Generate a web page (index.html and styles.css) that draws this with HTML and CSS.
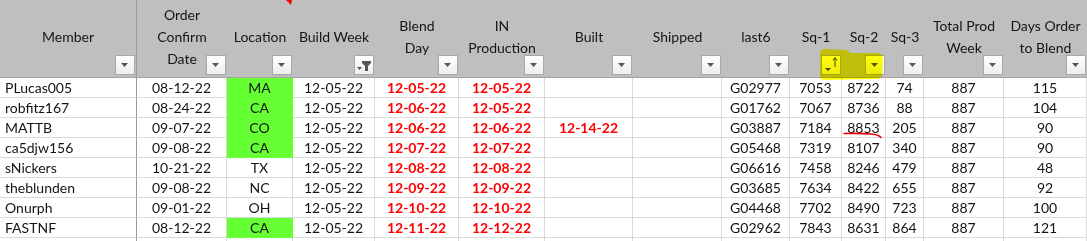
FILE: index.html
```html
<!DOCTYPE html>
<html>
<head>
<meta charset="utf-8">
<link rel="stylesheet" href="styles.css">
</head>
<body>
<div class="sheet">
  <div class="grid">
    <div class="h hm"><div class="lbl">Member</div><div class="btn"><svg width="8" height="5"><polygon points="0,0 7,0 3.5,4" fill="#555"/></svg></div></div>
    <div class="h"><div class="lbl">Order<br>Confirm<br>Date</div><div class="btn"><svg width="8" height="5"><polygon points="0,0 7,0 3.5,4" fill="#555"/></svg></div></div>
    <div class="h"><div class="lbl">Location</div><div class="btn"><svg width="8" height="5"><polygon points="0,0 7,0 3.5,4" fill="#555"/></svg></div></div>
    <div class="h"><div class="lbl">Build Week</div><div class="btn"><svg width="18" height="18"><polygon points="2,11 7,11 4.5,14" fill="#555"/><polygon points="7,5 16,5 16,7 13,10 13,15 10,15 10,10 7,7" fill="#555"/></svg></div></div>
    <div class="h"><div class="lbl">Blend<br>Day</div><div class="btn"><svg width="8" height="5"><polygon points="0,0 7,0 3.5,4" fill="#555"/></svg></div></div>
    <div class="h"><div class="lbl">IN<br>Production</div><div class="btn"><svg width="8" height="5"><polygon points="0,0 7,0 3.5,4" fill="#555"/></svg></div></div>
    <div class="h"><div class="lbl">Built</div><div class="btn"><svg width="8" height="5"><polygon points="0,0 7,0 3.5,4" fill="#555"/></svg></div></div>
    <div class="h"><div class="lbl">Shipped</div><div class="btn"><svg width="8" height="5"><polygon points="0,0 7,0 3.5,4" fill="#555"/></svg></div></div>
    <div class="h"><div class="lbl">last6</div><div class="btn"><svg width="8" height="5"><polygon points="0,0 7,0 3.5,4" fill="#555"/></svg></div></div>
    <div class="h"><div class="lbl">Sq-1</div><div class="btn"><svg width="18" height="18"><polygon points="3,12 9,12 6,15" fill="#444"/><line x1="13" y1="2" x2="13" y2="11" stroke="#444" stroke-width="1"/><polyline points="11,4.5 13,1.5 15,4.5" fill="none" stroke="#444" stroke-width="1"/></svg></div></div>
    <div class="h"><div class="lbl">Sq-2</div><div class="btn"><svg width="8" height="5"><polygon points="0,0 7,0 3.5,4" fill="#555"/></svg></div></div>
    <div class="h"><div class="lbl">Sq-3</div><div class="btn"><svg width="8" height="5"><polygon points="0,0 7,0 3.5,4" fill="#555"/></svg></div></div>
    <div class="h"><div class="lbl">Total Prod<br>Week</div><div class="btn"><svg width="8" height="5"><polygon points="0,0 7,0 3.5,4" fill="#555"/></svg></div></div>
    <div class="h"><div class="lbl">Days Order<br>to Blend</div><div class="btn"><svg width="8" height="5"><polygon points="0,0 7,0 3.5,4" fill="#555"/></svg></div></div>

    <div class="c m l">PLucas005</div><div class="c">08-12-22</div><div class="c g">MA</div><div class="c">12-05-22</div><div class="c r">12-05-22</div><div class="c r">12-05-22</div><div class="c"></div><div class="c"></div><div class="c">G02977</div><div class="c">7053</div><div class="c">8722</div><div class="c">74</div><div class="c">887</div><div class="c">115</div>

    <div class="c m l">robfitz167</div><div class="c">08-24-22</div><div class="c g">CA</div><div class="c">12-05-22</div><div class="c r">12-06-22</div><div class="c r">12-05-22</div><div class="c"></div><div class="c"></div><div class="c">G01762</div><div class="c">7067</div><div class="c">8736</div><div class="c">88</div><div class="c">887</div><div class="c">104</div>

    <div class="c m l">MATTB</div><div class="c">09-07-22</div><div class="c g">CO</div><div class="c">12-05-22</div><div class="c r">12-06-22</div><div class="c r">12-06-22</div><div class="c r">12-14-22</div><div class="c"></div><div class="c">G03887</div><div class="c">7184</div><div class="c">8853</div><div class="c">205</div><div class="c">887</div><div class="c">90</div>

    <div class="c m l">ca5djw156</div><div class="c">09-08-22</div><div class="c g">CA</div><div class="c">12-05-22</div><div class="c r">12-07-22</div><div class="c r">12-07-22</div><div class="c"></div><div class="c"></div><div class="c">G05468</div><div class="c">7319</div><div class="c">8107</div><div class="c">340</div><div class="c">887</div><div class="c">90</div>

    <div class="c m l">sNickers</div><div class="c">10-21-22</div><div class="c">TX</div><div class="c">12-05-22</div><div class="c r">12-08-22</div><div class="c r">12-08-22</div><div class="c"></div><div class="c"></div><div class="c">G06616</div><div class="c">7458</div><div class="c">8246</div><div class="c">479</div><div class="c">887</div><div class="c">48</div>

    <div class="c m l">theblunden</div><div class="c">09-08-22</div><div class="c">NC</div><div class="c">12-05-22</div><div class="c r">12-09-22</div><div class="c r">12-09-22</div><div class="c"></div><div class="c"></div><div class="c">G03685</div><div class="c">7634</div><div class="c">8422</div><div class="c">655</div><div class="c">887</div><div class="c">92</div>

    <div class="c m l">Onurph</div><div class="c">09-01-22</div><div class="c">OH</div><div class="c">12-05-22</div><div class="c r">12-10-22</div><div class="c r">12-10-22</div><div class="c"></div><div class="c"></div><div class="c">G04468</div><div class="c">7702</div><div class="c">8490</div><div class="c">723</div><div class="c">887</div><div class="c">100</div>

    <div class="c m l">FASTNF</div><div class="c">08-12-22</div><div class="c g">CA</div><div class="c">12-05-22</div><div class="c r">12-11-22</div><div class="c r">12-12-22</div><div class="c"></div><div class="c"></div><div class="c">G02962</div><div class="c">7843</div><div class="c">8631</div><div class="c">864</div><div class="c">887</div><div class="c">121</div>

    <div class="c m"></div><div class="c"></div><div class="c"></div><div class="c"></div><div class="c"></div><div class="c"></div><div class="c"></div><div class="c"></div><div class="c"></div><div class="c"></div><div class="c"></div><div class="c"></div><div class="c"></div><div class="c"></div>
  </div>
  <svg class="marks" width="1087" height="241">
    <polygon points="286,0 292,0 291,5" fill="#f00"/>
    <path d="M844 133.5 Q860 133 872 134 Q879 135 881 137.5" fill="none" stroke="#e00" stroke-width="1.6" stroke-linecap="round"/>
  </svg>
  <svg class="hilite" width="1087" height="241">
    <path d="M820 52 Q821 49 825 49 L846 50 Q849 51 850 53 L878 53 Q883 54 883 58 L882 76 Q881 79 876 79 L824 80 Q820 79 820 76 Z" fill="#ffff00"/>
  </svg>
</div>
</body>
</html>
```

FILE: styles.css
```css
html, body {
  margin: 0;
  padding: 0;
  background: #fff;
}

body {
  font-family: Lato, "Open Sans", sans-serif;
  font-size: 14px;
  color: #141414;
}

.sheet {
  position: relative;
  width: 1087px;
  height: 241px;
  overflow: hidden;
}

.grid {
  display: grid;
  grid-template-columns: 137px 90px 66px 82px 84px 86px 88px 89px 68px 52px 44px 38px 80px 83px;
  grid-template-rows: 78px repeat(9, 20px);
}

.h {
  box-sizing: border-box;
  background: #bfbfbf;
  border-bottom: 1px solid #a3a3a3;
  display: grid;
  color: #151515;
}

.hm {
  border-right: 1px solid #9a9a9a;
}

.lbl {
  grid-area: 1 / 1;
  align-self: center;
  justify-self: center;
  text-align: center;
  line-height: 22px;
  white-space: nowrap;
  padding-bottom: 3px;
}

.btn {
  grid-area: 1 / 1;
  align-self: end;
  justify-self: end;
  width: 20px;
  height: 20px;
  box-sizing: border-box;
  border: 1px solid #a8a8a8;
  background: linear-gradient(#ffffff, #ededed);
  margin: 0 1px 2px 0;
  display: flex;
  align-items: center;
  justify-content: center;
}

.btn svg {
  display: block;
}

.c {
  box-sizing: border-box;
  border-right: 1px solid #d9d9d9;
  border-bottom: 1px solid #d9d9d9;
  text-align: center;
  line-height: 19px;
  white-space: nowrap;
  overflow: hidden;
}

.c.m {
  border-right-color: #9a9a9a;
}

.l {
  text-align: left;
  padding-left: 5px;
}

.r {
  color: #ff0000;
  font-weight: bold;
}

.g {
  background: #66ff33;
  border-color: #66ff33;
}

.marks {
  position: absolute;
  left: 0;
  top: 0;
  pointer-events: none;
}

.hilite {
  position: absolute;
  left: 0;
  top: 0;
  pointer-events: none;
  mix-blend-mode: multiply;
  opacity: 0.95;
}
```
